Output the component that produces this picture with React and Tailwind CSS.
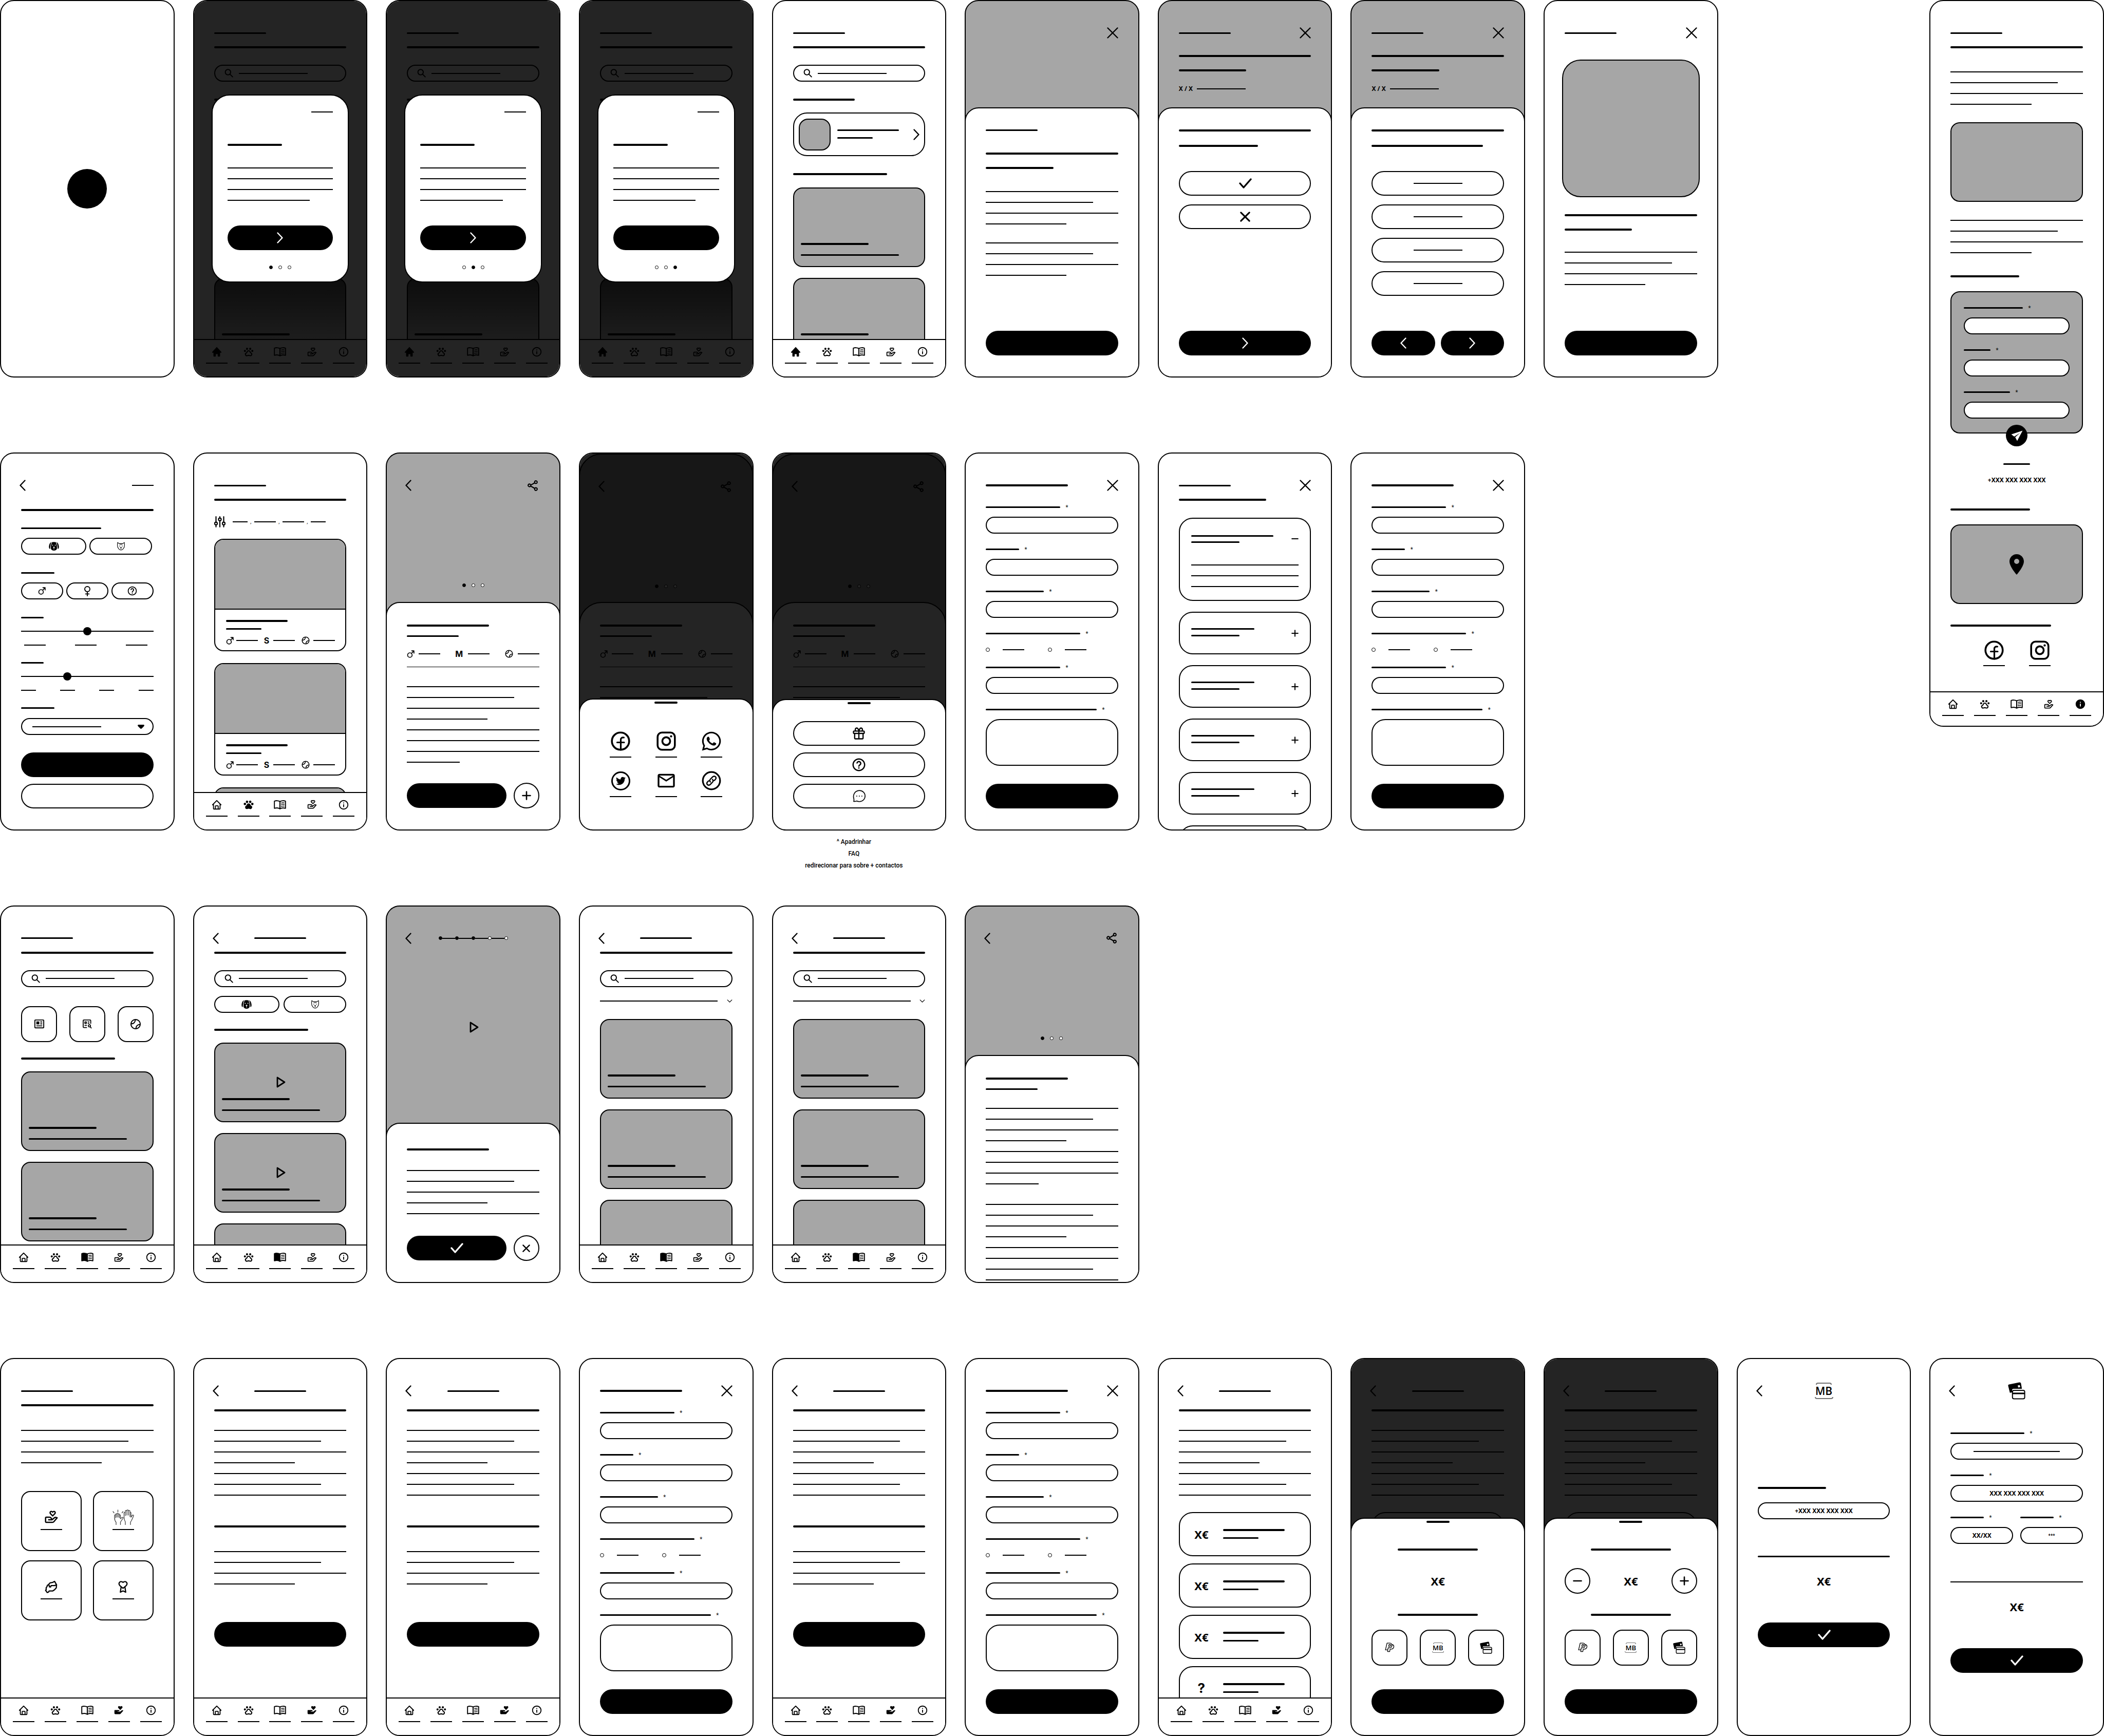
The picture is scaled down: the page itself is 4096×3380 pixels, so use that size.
import React, { useId } from "react";
import {
  BiHome,
  BiSolidHome,
  BiDonateHeart,
  BiSolidDonateHeart,
  BiInfoCircle,
  BiSolidInfoCircle,
  BiShareAlt,
  BiTennisBall,
  BiHelpCircle,
  BiGift,
  BiNews,
} from "react-icons/bi";
import { PiPawPrintBold, PiPawPrintFill } from "react-icons/pi";
import { MdMailOutline, MdLocationOn } from "react-icons/md";
import { FaTwitter, FaWhatsapp } from "react-icons/fa";

/* ---------- placeholder strokes ---------- */

const Thick = ({ className = "w-full" }) => <div className={`h-1 shrink-0 rounded-full bg-black ${className}`} />;
const Mid = ({ className = "w-full" }) => <div className={`h-[3px] shrink-0 rounded-full bg-black ${className}`} />;
const Thin = ({ className = "w-full" }) => <div className={`h-0.5 shrink-0 bg-black ${className}`} />;

const SPAN = { 100: "w-full", 81: "w-[81%]", 78: "w-[78%]", 61: "w-[61%]", 40: "w-[40%]" };
const Para = ({ lines = [100, 81, 100, 61], className = "" }) => (
  <div className={`flex flex-col gap-[19px] ${className}`}>
    {lines.map((n, i) => (
      <Thin key={i} className={SPAN[n]} />
    ))}
  </div>
);

/* ---------- small glyphs ---------- */

const Stroke = ({ d, className, box = "0 0 24 24", w = 3 }) => (
  <svg viewBox={box} className={className} fill="none" stroke="currentColor" strokeWidth={w} strokeLinecap="round" strokeLinejoin="round" aria-hidden="true">
    <path d={d} />
  </svg>
);
const ChevronRight = () => <Stroke box="0 0 12 22" w={2.4} className="h-[22px] w-3" d="M1.5 1.5L10.5 11L1.5 20.5" />;
const ChevronLeft = () => <Stroke box="0 0 12 22" w={2.4} className="h-[22px] w-3" d="M10.5 1.5L1.5 11L10.5 20.5" />;
const Cross = () => <Stroke box="0 0 22 22" w={2.4} className="size-[22px]" d="M1.5 1.5L20.5 20.5M20.5 1.5L1.5 20.5" />;
const BoldCross = ({ className = "size-[22px]" }) => <Stroke box="0 0 22 22" w={3.4} className={className} d="M2 2L20 20M20 2L2 20" />;
const Check = () => <Stroke box="0 0 28 20" w={3.4} className="h-5 w-7" d="M4 10L11 18L25 2" />;
const Plus = ({ className = "size-[18px]" }) => <Stroke box="0 0 18 18" w={2.6} className={className} d="M9 1.5V16.5M1.5 9H16.5" />;
const Minus = ({ className = "size-[18px]" }) => <Stroke box="0 0 18 18" w={2.6} className={className} d="M1.5 9H16.5" />;
const Play = () => <Stroke box="0 0 18 22" w={2.8} className="h-[22px] w-[18px]" d="M2 2L16 11L2 20Z" />;
const Magnifier = () => <Stroke box="0 0 17 17" w={2} className="size-[17px]" d="M12 6.500A5.200 5.200 0 1 1 1.600 6.500A5.200 5.200 0 1 1 12 6.500M10.600 10.400L15.800 15.600" />;
const Male = () => <Stroke box="0 0 16 16" w={1.800} className="size-[15px]" d="M11 10A4.700 4.700 0 1 1 1.600 10A4.700 4.700 0 1 1 11 10M9.600 6.600L14.600 1.400M10.200 1.200H14.800V6" />;
const Female = () => <Stroke box="0 0 16 20" w={1.900} className="h-5 w-4" d="M13 6A5 5 0 1 1 3 6A5 5 0 1 1 13 6M8 11V19M4.600 15.400H11.400" />;
const Sliders = () => (
  <svg viewBox="0 0 22 22" className="size-[22px]" fill="none" stroke="currentColor" strokeWidth="2.2" strokeLinecap="round" aria-hidden="true">
    <path d="M3.500 1.200V11M3.500 17.500V20.800M11 1.200V3.200M11 9V20.800M18.500 1.200V11M18.500 17.500V20.800" />
    <circle cx="3.500" cy="14.300" r="2.600" />
    <circle cx="11" cy="6.200" r="2.600" />
    <circle cx="18.500" cy="14.300" r="2.600" />
  </svg>
);
const Dog = () => (
  <svg viewBox="0 0 20 17" className="h-[17px] w-5" fill="currentColor" aria-hidden="true">
    <path d="M4.800 .6C2.400 1.400 .3 5.500 .3 10c0 2.600 1 4 2.200 3.800L3.400 6.500z" />
    <path d="M15.200 .6C17.600 1.400 19.700 5.500 19.700 10c0 2.600-1 4-2.200 3.800L16.600 6.500z" />
    <path fillRule="evenodd" d="M6 .8C8.500 0 11.500 0 14 .8l1.700 6L16 13c-.8 2.600-3 3.900-6 3.900S4.800 15.600 4 13l.3-6.200zM7.400 5.600a.9 .9 0 1 0 0 1.800 .9 .9 0 0 0 0-1.800m5.200 0a.9 .9 0 1 0 0 1.800 .9 .9 0 0 0 0-1.800M10 9.200l-1.900 1.100L9.500 11.800v2.900h1v-2.900l1.400-1.500z" />
  </svg>
);
const Cat = () => (
  <svg viewBox="0 0 18 18" className="h-[17px] w-[17px]" fill="none" stroke="currentColor" strokeWidth="1.200" strokeLinejoin="round" strokeLinecap="round" aria-hidden="true">
    <path d="M2 1.200L5 3.400H13L16 1.200C16.600 5 16.400 8 15.800 11L12.600 15.600L9 17L5.400 15.600L2.200 11C1.600 8 1.400 5 2 1.200ZM9 3.400V6M6.800 3.600V5.200M11.200 3.600V5.200M8 11.400H10L9 12.600ZM9 12.600V14.200M5.800 8.600H6.600M11.400 8.600H12.200" />
  </svg>
);
const BookShape = ({ className, filled }) => (
  <svg viewBox="0 0 24 18" className={className} fill="none" stroke="currentColor" strokeWidth="1.900" strokeLinejoin="round" strokeLinecap="round" aria-hidden="true">
    <path d="M12 2.600C9.500 .9 4.500 .6 1.200 1.800V15.800C4.500 14.800 9.500 15 12 16.700Z" fill={filled ? "currentColor" : "none"} />
    <path d="M12 2.600C14.500 .9 19.500 .6 22.800 1.800V15.800C19.500 14.800 14.500 15 12 16.700Z" />
    <path d="M14.600 5.600C16.400 4.900 18.400 4.800 20.200 5.100M14.600 8.800C16.400 8.100 18.400 8 20.200 8.300M14.600 12C16.400 11.300 18.400 11.200 20.200 11.500" strokeWidth="1.400" />
  </svg>
);
const Book = ({ className }) => <BookShape className={className} />;
const BookFilled = ({ className }) => <BookShape className={className} filled />;
const Chat = () => (
  <svg viewBox="0 0 28 26" className="h-6 w-[27px]" fill="none" stroke="currentColor" strokeWidth="1.800" strokeLinejoin="round" aria-hidden="true">
    <path d="M2.600 24.200C3.400 22.500 3.400 20.800 2.900 18.500C.5 12 4 1.400 14.500 1.200C21 1.200 26.600 6 26.600 12.700C26.600 19.400 21.500 24.600 14.500 24.600C12.400 24.600 10.800 24.200 9 23.300C7 24.200 5 24.500 2.600 24.200Z" />
    <path d="M9 13H9.100M14.400 13H14.500M19.800 13H19.900" strokeWidth="2" strokeLinecap="round" />
  </svg>
);
const NewsSearch = () => (
  <Stroke box="0 0 20 20" w={1.900} className="size-[19px]" d="M9 17.500H3.500A1.500 1.500 0 0 1 2 16V3.500A1.500 1.500 0 0 1 3.500 2H16A1.500 1.500 0 0 1 17.500 3.500V9M5.500 6H8.500V9H5.500ZM12 6H14M12 9H14M5.500 13H9M17 14A2.200 2.200 0 1 1 12.600 14A2.200 2.200 0 1 1 17 14M16.500 15.800L18.500 18.500" />
);
const Facebook = () => (
  <svg viewBox="0 0 38 38" className="size-[38px]" fill="none" stroke="currentColor" aria-hidden="true">
    <circle cx="19" cy="19" r="16.800" strokeWidth="3.600" />
    <path d="M19.500 36V16.500C19.500 13 21.500 11.500 25.500 12M12.500 21.500H26" strokeWidth="3.200" strokeLinecap="round" />
  </svg>
);
const Instagram = () => (
  <svg viewBox="0 0 38 38" className="size-[38px]" fill="none" stroke="currentColor" strokeWidth="3.600" aria-hidden="true">
    <rect x="2.200" y="2.200" width="33.600" height="33.600" rx="8.500" />
    <circle cx="19" cy="19" r="7.600" />
    <circle cx="28.500" cy="9.600" r="2.200" fill="currentColor" stroke="none" />
  </svg>
);
const LinkCircle = () => (
  <svg viewBox="0 0 38 38" className="size-[38px]" fill="none" stroke="currentColor" strokeLinecap="round" aria-hidden="true">
    <circle cx="19" cy="19" r="16.800" strokeWidth="3.200" />
    <path strokeWidth="2.400" d="M17 21.500C15.300 19.700 15.400 17.600 17 16L21.500 11.500C25.500 8 30 13 26.600 16.600L24.500 18.600M21 16.500C22.700 18.300 22.600 20.400 21 22L16.500 26.500C12.500 30 8 25 11.400 21.400L13.500 19.400" />
  </svg>
);
const Cards = ({ className }) => (
  <svg viewBox="0 0 34 34" className={className} aria-hidden="true">
    <path fill="currentColor" fillRule="evenodd" d="M2.500 4.500L22 .6C24 .3 25 1 25.400 2.600L27.200 13H11C9 13 8 14 8 16V20L3.800 20.800L.4 7C.2 5.600 1 4.800 2.500 4.500ZM19 6.500L20 10.500L24 9.700L23 5.700Z" />
    <rect x="8.800" y="16" width="23.800" height="16.600" rx="3" fill="none" stroke="currentColor" strokeWidth="2" />
    <path d="M9 22H32.500" stroke="currentColor" strokeWidth="3" />
  </svg>
);
const Paypal = () => (
  <svg viewBox="0 0 20 20" className="size-[19px]" fill="none" stroke="currentColor" strokeWidth="1.400" strokeLinejoin="round" aria-hidden="true">
    <path d="M4.500 1.200H10.500C16 1.200 16 10.800 9.500 10.800H6.800L5.800 15.200H1.200ZM15 4.200C20.500 5.500 19 13.600 12.500 13.600H10.800L9.800 18.600H5.600L6.200 15.200M8.600 4.200H10.800C13 4.200 12.600 7.800 9.800 7.800H7.800Z" />
  </svg>
);
const Clapping = () => (
  <svg viewBox="0 0 42 30" className="h-[30px] w-[42px] text-neutral-700" fill="none" stroke="currentColor" strokeWidth="1.300" strokeLinecap="round" strokeLinejoin="round" aria-hidden="true">
    <path d="M7 29.500V25C4.500 22 4 20 4 16V11.500C4 10 6 10 6 11.500V16V9.500C6 8 8.500 8 8.500 9.500V15V8.500C8.500 7 11 7 11 8.500V15V9.500C11 8 13.500 8 13.500 9.500V16V11.500C13.500 10 15.500 10 15.500 11.500V18L18.500 15.500C20 14.500 21.500 16 20.500 17L15.500 24.500V29.500" />
    <path d="M25 29.500V24C23 21 22.500 19 22.500 15V6.500C22.500 5 25 5 25 6.500V12V3C25 1.400 28 1.400 28 3V11V2C28 .5 31 .5 31 2V11V3C31 1.500 34 1.500 34 3V14V6.500C34 5 36 5 36 6.500V15L38.500 11.500C39.500 10 41.500 11 41 12.500L37 21.500L35 24.500V29.500" />
    <path d="M10.500 1V5M1 4L3 6.500M20.500 4L18.500 6.500" />
  </svg>
);
const Hands = () => <Stroke box="0 0 26 26" w={2.400} className="size-[25px]" d="M9 10C6 8 5 10 5 12L3 15V19L1.800 20L5 24.500L8 23.500L9 21.500H16L20 19L23.500 15L24 9L20 2L16.500 4L11 5L8 8L9 10L9.500 13L12 13.500L13 10.500L20 10.500L24 9" />;
const Ribbon = () => <Stroke box="0 0 20 26" w={2.400} className="h-[25px] w-[19px]" d="M10 16L4 11C-1 6 4 -1 10 4C16 -1 21 6 16 11ZM6 14L4.500 24L10 21.500L15.500 24L14 14" />;

/* payment mark: two letters between two brackets */
const Mb = ({ big }) => (
  <span className={`flex flex-col items-center justify-between font-['Open_Sans',sans-serif] font-semibold ${big ? "h-8 w-9 text-[21px]" : "h-5 w-[23px] text-[13px]"}`}>
    <span className={`w-[84%] shrink-0 border-neutral-500 ${big ? "h-1 rounded-t border-2 border-b-0" : "h-[3px] rounded-t-sm border border-b-0"}`} />
    <span className={big ? "leading-6" : "leading-[14px]"}>MB</span>
    <span className={`w-full shrink-0 border-neutral-500 ${big ? "h-1 rounded-b border-2 border-t-0" : "h-[3px] rounded-b-sm border border-t-0"}`} />
  </span>
);

/* ---------- frame pieces ---------- */

const Phone = ({ children, className = "aspect-[375/812] bg-white" }) => (
  <article className={`relative flex w-full flex-col overflow-hidden rounded-[27px] border-2 border-black ${className}`}>{children}</article>
);
const Body = ({ children, className = "" }) => <div className={`flex min-h-0 flex-1 flex-col overflow-hidden px-[39px] pt-[51px] ${className}`}>{children}</div>;
const Top = ({ children, className }) => <div className={`flex shrink-0 flex-col px-[39px] pt-[51px] ${className}`}>{children}</div>;
const Sheet = ({ children, className = "rounded-t-[27px]" }) => (
  <div className={`-mx-0.5 -mb-0.5 flex min-h-0 flex-1 flex-col overflow-hidden border-2 border-black bg-white px-[39px] pb-[41px] ${className}`}>{children}</div>
);
const Dim = () => <div className="absolute inset-0 bg-black/86" />;
const Drawer = ({ children, className = "" }) => (
  <div className={`absolute -inset-x-0.5 -bottom-0.5 flex flex-col rounded-[27px] border-2 border-black bg-white px-[39px] pt-1 ${className}`}>
    <Thick className="w-[45px] self-center" />
    {children}
  </div>
);

const Header = ({ left, center, right }) => (
  <header className="grid shrink-0 grid-cols-[1fr_auto_1fr] grid-rows-[22px] items-center">
    <div className="flex">{left}</div>
    <div>{center}</div>
    <div className="flex justify-end">{right}</div>
  </header>
);
const Back = () => (
  <button type="button" aria-label="Back" className="-ml-[3px]">
    <ChevronLeft />
  </button>
);
const Close = () => (
  <button type="button" aria-label="Close">
    <Cross />
  </button>
);
const Share = () => (
  <button type="button" aria-label="Share">
    <BiShareAlt className="size-[25px]" />
  </button>
);
const Tag = () => <Mid className="w-[101px]" />;

const Pill = ({ children, className = "", label = "Continue" }) => (
  <button type="button" aria-label={label} className={`flex h-12 shrink-0 items-center justify-center rounded-full bg-black text-white ${className}`}>
    {children}
  </button>
);
const Outline = ({ children, className = "h-12", label = "Option" }) => (
  <button type="button" aria-label={label} className={`flex shrink-0 items-center justify-center rounded-full border-2 border-black ${className}`}>
    {children}
  </button>
);
const Tile = ({ children, label, className = "size-[70px] rounded-[18px]" }) => (
  <button type="button" aria-label={label} className={`flex items-center justify-center border-2 border-black ${className}`}>
    {children}
  </button>
);

const Search = () => (
  <label className="mt-8 flex h-[33px] shrink-0 items-center rounded-full border-2 border-black pl-[18px]">
    <Magnifier />
    <Thin className="ml-[11px] w-[134px]" />
    <input type="search" aria-label="Search" className="min-w-0 flex-1 bg-transparent outline-none" />
  </label>
);

const NAV = [
  ["Home", BiHome, BiSolidHome, "size-[22px]"],
  ["Animals", PiPawPrintBold, PiPawPrintFill, "size-[22px]"],
  ["Learn", Book, BookFilled, "h-[18px] w-6"],
  ["Help", BiDonateHeart, BiSolidDonateHeart, "size-[21px]"],
  ["Info", BiInfoCircle, BiSolidInfoCircle, "size-[22px]"],
];
const Nav = ({ active, className = "h-[73px]" }) => (
  <nav className={`flex shrink-0 justify-between border-t-2 border-black bg-white px-[23px] pt-3 ${className}`}>
    {NAV.map(([name, Off, On, size], i) => {
      const Icon = i === active ? On : Off;
      return (
        <a key={name} href="#" aria-label={name} className="flex w-[42px] flex-col items-center">
          <span className="flex h-[22px] items-center">
            <Icon className={size} />
          </span>
          <Thin className="mt-[10px] w-full" />
        </a>
      );
    })}
  </nav>
);

const Dots = ({ at = 0, n = 3, className = "" }) => (
  <div className={`flex justify-center gap-[11px] ${className}`}>
    {Array.from({ length: n }, (_, i) => (
      <span key={i} className={`size-[7px] rounded-full border border-black ${i === at ? "bg-black" : "bg-white"}`} />
    ))}
  </div>
);

const Picture = ({ play, tint = "bg-[#a6a6a6]" }) => (
  <div className={`relative flex h-[155px] shrink-0 flex-col justify-end rounded-[18px] border-2 border-black px-[13px] pb-5 ${tint}`}>
    {play && (
      <button type="button" aria-label="Play" className="absolute inset-0 flex items-center justify-center pl-1">
        <Play />
      </button>
    )}
    <Thick className="w-[132px]" />
    <Mid className="mt-[18px] w-[191px]" />
  </div>
);
const Pictures = ({ n = 3, play, className, tint }) => (
  <div className={`flex flex-col gap-[21px] ${className}`}>
    {Array.from({ length: n }, (_, i) => (
      <Picture key={i} play={play} tint={tint} />
    ))}
  </div>
);

const FIELD = "h-[33px] w-full shrink-0 rounded-full border-2 border-black bg-white text-center font-['Noto_Sans',sans-serif] font-bold outline-none";
const LabelBar = ({ id, w }) => (
  <label htmlFor={id} className="flex h-3 shrink-0 items-center">
    <Mid className={w} />
    <span className="ml-2.5 h-3 font-['Noto_Sans',sans-serif] text-[10px] leading-3">*</span>
  </label>
);
const Field = ({ w, value, size = "text-[12px]", className = "" }) => {
  const id = useId();
  return (
    <div className={`flex min-w-0 flex-col gap-[13px] ${className}`}>
      <LabelBar id={id} w={w} />
      <input id={id} type="text" defaultValue={value} className={`${FIELD} ${size}`} />
    </div>
  );
};
const Area = () => {
  const id = useId();
  return (
    <div className="flex flex-col gap-[13px]">
      <LabelBar id={id} w="w-[216px]" />
      <textarea id={id} className="h-[91px] w-full resize-none rounded-[27px] border-2 border-black outline-none" />
    </div>
  );
};
const Radios = () => {
  const name = useId();
  return (
    <fieldset className="flex flex-col gap-[22px]">
      <legend className="contents">
        <LabelBar w="w-[184px]" />
      </legend>
      <div className="flex gap-[46px]">
        {["Yes", "No"].map((t) => (
          <label key={t} className="flex h-2 items-center gap-[25px]">
            <input type="radio" name={name} aria-label={t} className="size-2 appearance-none rounded-full border border-black bg-white checked:bg-black" />
            <Thin className="w-[42px]" />
          </label>
        ))}
      </div>
    </fieldset>
  );
};

const AnimalPills = ({ className }) => (
  <div className={`flex shrink-0 ${className}`}>
    <Outline label="Dog" className="h-[33px] w-[127px]">
      <Dog />
    </Outline>
    <Outline label="Cat" className="h-[33px] w-[122px]">
      <Cat />
    </Outline>
  </div>
);

/* ---------- screens ---------- */

const HomeContent = ({ tint }) => (
  <>
    <Body>
      <Header left={<Tag />} />
      <Thick className="mt-[15px] w-full" />
      <Search />
      <Thick className="mt-[33px] w-[120px]" />
      <a href="#" aria-label="Featured" className="mt-[23px] flex h-[85px] shrink-0 items-center rounded-[27px] border-2 border-black pr-[9px] pl-[9px]">
        <span className="size-[62px] rounded-[18px] border-2 border-black bg-[#a6a6a6]" />
        <span className="ml-[13px] flex flex-1 flex-col gap-3 pb-0.5">
          <Mid className="w-[120px]" />
          <Mid className="w-[69px]" />
        </span>
        <ChevronRight />
      </a>
      <Thick className="mt-[33px] w-[183px]" />
      <Pictures n={2} className="mt-6" tint={tint} />
    </Body>
    <Nav active={0} />
  </>
);

const Onboarding = ({ step }) => (
  <Phone>
    <HomeContent tint="bg-linear-to-b from-[#5a5a5a] to-[#efefef]" />
    <Dim />
    <section aria-label="Introduction" className="absolute inset-x-[34px] top-[182px] flex flex-col rounded-[35px] border-2 border-black bg-white px-[29px] pt-[31px] pb-[24px]">
      <Thin className="w-[42px] self-end" />
      <Thick className="mt-[61px] w-[106px]" />
      <Para lines={[100, 100, 100, 78]} className="mt-[42px]" />
      <Pill className="mt-12" label="Next">
        {step < 2 && <ChevronRight />}
      </Pill>
      <Dots at={step} className="mt-[30px]" />
    </section>
  </Phone>
);

const Splash = () => (
  <Phone>
    <div className="m-auto size-[77px] rounded-full bg-black" />
  </Phone>
);

const Intro = () => (
  <Phone className="aspect-[375/812] bg-[#a6a6a6]">
    <Top className="h-[207px]">
      <Header right={<Close />} />
    </Top>
    <Sheet className="rounded-t-[27px] pt-[41px]">
      <Tag />
      <Thick className="mt-[42px] w-full" />
      <Thick className="mt-6 w-[51%]" />
      <Para className="mt-[43px]" />
      <Para className="mt-[35px]" />
      <Pill className="mt-auto" />
    </Sheet>
  </Phone>
);

const Quiz = ({ many }) => (
  <Phone className="aspect-[375/812] bg-[#a6a6a6]">
    <Top className="h-[207px]">
      <Header left={<Tag />} right={<Close />} />
      <Thick className="mt-8 w-full" />
      <Thick className="mt-6 w-[51%]" />
      <div className="mt-[26px] flex h-4 items-center gap-2">
        <span className="font-['Noto_Sans',sans-serif] text-[12px] leading-4 font-bold whitespace-pre">X / X</span>
        <Thin className="w-[95px]" />
      </div>
    </Top>
    <Sheet className="rounded-t-[27px] pt-[41px]">
      <Thick />
      <Thick className={`mt-[26px] ${many ? "w-[84%]" : "w-[60%]"}`} />
      <div className="mt-[47px] flex flex-col gap-[17px]">
        {many ? (
          [1, 2, 3, 4].map((i) => (
            <Outline key={i} label={`Answer ${i}`}>
              <Thin className="w-[95px]" />
            </Outline>
          ))
        ) : (
          <>
            <Outline label="Yes">
              <Check />
            </Outline>
            <Outline label="No">
              <BoldCross className="size-5" />
            </Outline>
          </>
        )}
      </div>
      <div className="mt-auto flex gap-[11px]">
        {many && (
          <Pill label="Previous" className="flex-1">
            <ChevronLeft />
          </Pill>
        )}
        <Pill label="Next" className="flex-1">
          <ChevronRight />
        </Pill>
      </div>
    </Sheet>
  </Phone>
);

const Result = () => (
  <Phone>
    <Body className="pb-[41px]">
      <Header left={<Tag />} right={<Close />} />
      <div className="-mx-[5px] mt-[41px] aspect-square shrink-0 rounded-[36px] border-2 border-black bg-[#a6a6a6]" />
      <Thick className="mt-[33px] w-full" />
      <Thick className="mt-6 w-[51%]" />
      <Para className="mt-[41px]" />
      <Pill className="mt-auto" />
    </Body>
  </Phone>
);

const About = () => (
  <Phone className="self-start bg-white">
    <div className="flex flex-col px-[39px] pt-[51px]">
      <Header left={<Tag />} />
      <Thick className="mt-[15px] w-full" />
      <Para className="mt-[45px]" />
      <div className="mt-[34px] h-[155px] rounded-[18px] border-2 border-black bg-[#a6a6a6]" />
      <Para className="mt-[35px]" />
      <Thick className="mt-[43px] w-[52%]" />
      <form className="mt-[27px] flex flex-col rounded-[18px] border-2 border-black bg-[#a6a6a6] px-6 pt-6 pb-[27px]">
        <div className="flex flex-col gap-6">
          <Field w="w-[115px]" />
          <Field w="w-[52px]" />
          <Field w="w-[90px]" />
        </div>
      </form>
      <button type="button" aria-label="Send" className="relative -mt-[17px] flex size-[42px] items-center justify-center self-center rounded-full bg-black text-white">
        <svg viewBox="0 0 24 22" className="h-[21px] w-[23px]" fill="currentColor" aria-hidden="true">
          <path d="M23.500 .5L.5 8L6.500 12.500L18.500 5L8.500 14L12.500 21.500Z" />
        </svg>
      </button>
      <Mid className="mt-[33px] w-[52px] self-center" />
      <p className="mt-[22px] text-center font-['Noto_Sans',sans-serif] text-[12px] leading-4 font-bold">+XXX XXX XXX XXX</p>
      <Thick className="mt-[47px] w-[60%]" />
      <div className="mt-[27px] flex h-[155px] items-center justify-center rounded-[18px] border-2 border-black bg-[#a6a6a6]">
        <MdLocationOn className="size-12" />
      </div>
      <Thick className="mt-10 w-[76%]" />
      <div className="mt-[27px] grid w-[178px] grid-cols-2 self-center">
        {[Facebook, Instagram].map((Icon, i) => (
          <a key={i} href="#" aria-label={i ? "Instagram" : "Facebook"} className="flex flex-col items-center gap-[10px]">
            <Icon />
            <Thin className="w-[42px]" />
          </a>
        ))}
      </div>
    </div>
    <Nav active={4} className="mt-[49px] h-[67px]" />
  </Phone>
);

const RANGE =
  "mt-[17px] h-4 w-full shrink-0 cursor-pointer appearance-none bg-transparent [&::-webkit-slider-runnable-track]:h-0.5 [&::-webkit-slider-runnable-track]:bg-black [&::-webkit-slider-thumb]:-mt-[7px] [&::-webkit-slider-thumb]:size-4 [&::-webkit-slider-thumb]:appearance-none [&::-webkit-slider-thumb]:rounded-full [&::-webkit-slider-thumb]:bg-black";

const Filters = () => (
  <Phone>
    <Body>
      <Header left={<Back />} right={<Thin className="w-[42px]" />} />
      <Thick className="mt-[35px] w-full" />
      <Mid className="mt-8 w-[156px]" />
      <AnimalPills className="mt-[17px] gap-1.5" />
      <Mid className="mt-[34px] w-[65px]" />
      <div className="mt-[17px] flex shrink-0 gap-1.5">
        <Outline label="Male" className="h-[33px] flex-1">
          <Male />
        </Outline>
        <Outline label="Female" className="h-[33px] flex-1">
          <Female />
        </Outline>
        <Outline label="Unknown" className="h-[33px] flex-1">
          <BiHelpCircle className="size-[21px]" />
        </Outline>
      </div>
      <Mid className="mt-[34px] w-11" />
      <input type="range" aria-label="Age" defaultValue="50" className={RANGE} />
      <div className="mt-[18px] flex justify-between pr-3 pl-1.5">
        <Thin className="w-[42px]" />
        <Thin className="w-[42px]" />
        <Thin className="w-[42px]" />
      </div>
      <Mid className="mt-8 w-11" />
      <input type="range" aria-label="Size" defaultValue="34" className={RANGE} />
      <div className="mt-[18px] flex justify-between">
        {[0, 1, 2, 3].map((i) => (
          <Thin key={i} className="w-[29px]" />
        ))}
      </div>
      <Mid className="mt-8 w-[65px]" />
      <div className="relative mt-[18px] flex h-[33px] shrink-0 items-center justify-between rounded-full border-2 border-black pr-4 pl-5">
        <Thin className="w-[134px]" />
        <svg viewBox="0 0 13 8" className="h-2 w-[13px]" aria-hidden="true">
          <path d="M2 0H11C13 0 13.500 1.500 12.200 3L8 7.300C7 8.200 6 8.200 5 7.300L.8 3C-.5 1.500 0 0 2 0Z" />
        </svg>
        <select aria-label="Region" className="absolute inset-0 size-full appearance-none opacity-0">
          <option> </option>
        </select>
      </div>
      <Pill className="mt-[34px]" label="Apply" />
      <Outline className="mt-[13px] h-12" label="Clear" />
    </Body>
  </Phone>
);

const Trait = ({ icon, className }) => (
  <span className={`flex items-center ${className}`}>
    {icon}
    <Thin className="w-[42px]" />
  </span>
);
const Letter = ({ children }) => <span className="font-['Inter',sans-serif] text-[16px] leading-4 font-bold">{children}</span>;

const AnimalCard = ({ peek }) => (
  <a href="#" aria-label="Animal" className="flex shrink-0 flex-col overflow-hidden rounded-[18px] border-2 border-black">
    <span className="h-[136px] border-b-2 border-black bg-[#a6a6a6]" />
    {!peek && (
      <span className="flex flex-col pt-5 pb-[11px] pl-[21px]">
        <Thick className="w-[120px]" />
        <Mid className="mt-3 w-[69px]" />
        <span className="mt-[13px] flex h-4 gap-3">
          <Trait className="gap-[5px]" icon={<Male />} />
          <Trait className="gap-2" icon={<Letter>S</Letter>} />
          <Trait className="gap-1.5" icon={<BiTennisBall className="size-[18px]" />} />
        </span>
      </span>
    )}
  </a>
);

const Animals = () => (
  <Phone>
    <Body>
      <Header left={<Tag />} />
      <Thick className="mt-[15px] w-full" />
      <div className="mt-[30px] flex h-[22px] shrink-0 items-center">
        <Sliders />
        <div className="ml-[14px] flex items-center">
          {["w-[29px]", "w-[42px]", "w-[42px]", "w-[29px]"].map((w, i) => (
            <React.Fragment key={i}>
              {i > 0 && <span className="w-[13px] text-center font-['Roboto',sans-serif] text-[10px] leading-none">,</span>}
              <Thin className={w} />
            </React.Fragment>
          ))}
        </div>
      </div>
      <div className="mt-[22px] flex flex-col gap-[23px]">
        <AnimalCard />
        <AnimalCard />
        <AnimalCard peek />
      </div>
    </Body>
    <Nav active={1} />
  </Phone>
);

const DetailContent = ({ dim }) => (
  <>
    <Top className={dim ? "-mx-0.5 -mb-[46px] h-[335px] rounded-t-[44px] border-2 border-black bg-[#a6a6a6] pt-[49px]" : "h-[289px]"}>
      <Header left={<Back />} right={<Share />} />
      <Dots className="mt-[180px]" />
    </Top>
    <Sheet className={dim ? "relative rounded-t-[44px] pt-[42px]" : "rounded-t-[27px] pt-[42px]"}>
      <Thick className="w-[160px]" />
      <Mid className="mt-[17px] w-[101px]" />
      <div className="mt-[25px] flex h-4 shrink-0 justify-between">
        <Trait className="gap-2" icon={<Male />} />
        <Trait className="gap-2.5" icon={<Letter>M</Letter>} />
        <Trait className="gap-2" icon={<BiTennisBall className="size-[18px]" />} />
      </div>
      <div className="mt-[17px] h-px shrink-0 bg-black" />
      <Para className="mt-[37px]" lines={[100, 81, 100, 61, 100, 100, 100, 40]} />
      <div className="mt-auto flex items-center gap-[14px]">
        <Pill className="flex-1" label="Adopt" />
        <Outline className="size-[50px]" label="More">
          <Plus />
        </Outline>
      </div>
    </Sheet>
  </>
);
const Detail = () => (
  <Phone className="aspect-[375/812] bg-[#a6a6a6]">
    <DetailContent />
  </Phone>
);
const DetailDim = ({ children }) => (
  <Phone>
    <DetailContent dim />
    <Dim />
    {children}
  </Phone>
);

const SHARE = [
  ["Facebook", <Facebook />],
  ["Instagram", <Instagram />],
  ["WhatsApp", <FaWhatsapp className="size-[42px]" />],
  [
    "Twitter",
    <span className="flex size-[37px] items-center justify-center rounded-full border-[3px] border-black">
      <FaTwitter className="size-[19px]" />
    </span>,
  ],
  ["Mail", <MdMailOutline className="size-10" />],
  ["Copy link", <LinkCircle />],
];
const ShareDetail = () => (
  <DetailDim>
    <Drawer className="pb-[63px]">
      <div className="-mx-1 mt-[55px] grid grid-cols-3 gap-y-[27px]">
        {SHARE.map(([name, icon]) => (
          <a key={name} href="#" aria-label={name} className="flex flex-col items-center gap-[11px]">
            <span className="flex h-[37px] items-center">{icon}</span>
            <Thin className="w-[42px]" />
          </a>
        ))}
      </div>
    </Drawer>
  </DetailDim>
);
const MoreDetail = () => (
  <DetailDim>
    <Drawer className="pb-[41px]">
      <div className="mt-[33px] flex flex-col gap-[13px]">
        <Outline label="Sponsor">
          <BiGift className="size-7" />
        </Outline>
        <Outline label="FAQ">
          <BiHelpCircle className="size-[30px]" />
        </Outline>
        <Outline label="Contact">
          <Chat />
        </Outline>
      </div>
    </Drawer>
  </DetailDim>
);

const Form = () => (
  <Phone>
    <Body className="pb-[41px]">
      <Header left={<Thick className="w-[160px]" />} right={<Close />} />
      <form className="mt-[25px] flex flex-1 flex-col">
        <div className="flex flex-col gap-6">
          <Field w="w-[145px]" />
          <Field w="w-[65px]" />
          <Field w="w-[113px]" />
          <Radios />
          <Field w="w-[145px]" />
          <Area />
        </div>
        <Pill className="mt-auto" label="Submit" />
      </form>
    </Body>
  </Phone>
);

const Faq = () => (
  <Phone>
    <Body>
      <Header left={<Tag />} right={<Close />} />
      <Thick className="mt-[15px] w-[66%]" />
      <div className="mt-[33px] flex flex-col gap-[21px]">
        <section className="flex h-[162px] shrink-0 flex-col rounded-[27px] border-2 border-black px-[22px] pt-[32px]">
          <div className="flex items-start justify-between">
            <div className="flex flex-col gap-[9px]">
              <Mid className="w-[160px]" />
              <Mid className="w-[94px]" />
            </div>
            <button type="button" aria-label="Collapse">
              <Minus className="size-[14px]" />
            </button>
          </div>
          <Para lines={[100, 100, 100]} className="mt-[42px]" />
        </section>
        {[1, 2, 3, 4, 5].map((i) => (
          <button key={i} type="button" aria-label={`Question ${i}`} className="flex h-[83px] shrink-0 items-center justify-between rounded-[27px] border-2 border-black px-[22px]">
            <span className="flex flex-col gap-[10px] pb-1">
              <Mid className="w-[123px]" />
              <Mid className="w-[94px]" />
            </span>
            <Plus className="size-[14px]" />
          </button>
        ))}
      </div>
    </Body>
  </Phone>
);

const Learn = () => (
  <Phone>
    <Body>
      <Header left={<Tag />} />
      <Thick className="mt-[15px] w-full" />
      <Search />
      <div className="mt-[37px] flex shrink-0 justify-between">
        <Tile label="News">
          <BiNews className="size-[23px]" />
        </Tile>
        <Tile label="Find articles">
          <NewsSearch />
        </Tile>
        <Tile label="Training">
          <BiTennisBall className="size-6" />
        </Tile>
      </div>
      <Thick className="mt-[30px] w-[183px]" />
      <Pictures n={2} className="mt-[23px]" />
    </Body>
    <Nav active={2} />
  </Phone>
);
const Videos = () => (
  <Phone>
    <Body>
      <Header left={<Back />} center={<Tag />} />
      <Thick className="mt-[15px] w-full" />
      <Search />
      <AnimalPills className="mt-[17px] justify-between" />
      <Thick className="mt-[31px] w-[183px]" />
      <Pictures play className="mt-[23px]" />
    </Body>
    <Nav active={2} />
  </Phone>
);
const Lesson = () => (
  <Phone className="aspect-[375/812] bg-[#a6a6a6]">
    <Top className="h-[421px]">
      <Header
        left={<Back />}
        center={
          <ol className="flex items-center" aria-label="Steps">
            {[1, 1, 1, 0, 0].map((on, i) => (
              <li key={i} className="flex items-center">
                {i > 0 && <Thin className="w-[25px]" />}
                <span className={`size-[7px] rounded-full border border-black ${on ? "bg-black" : "bg-white"}`} />
              </li>
            ))}
          </ol>
        }
      />
      <button type="button" aria-label="Play" className="mt-[151px] self-center pl-1">
        <Play />
      </button>
    </Top>
    <Sheet className="rounded-t-[27px] pt-12">
      <Thick className="w-[160px]" />
      <Para className="mt-[38px]" lines={[100, 81, 100, 61, 100]} />
      <div className="mt-auto flex items-center gap-[14px]">
        <Pill className="flex-1" label="Done">
          <Check />
        </Pill>
        <Outline className="size-[50px]" label="Dismiss">
          <BoldCross className="size-[15px]" />
        </Outline>
      </div>
    </Sheet>
  </Phone>
);
const Articles = () => (
  <Phone>
    <Body>
      <Header left={<Back />} center={<Tag />} />
      <Thick className="mt-[15px] w-full" />
      <Search />
      <button type="button" aria-label="Sort" className="mt-[23px] flex h-2 shrink-0 items-center justify-between">
        <Thin className="w-[229px]" />
        <Stroke box="0 0 12 7" w={1.500} className="h-[6px] w-[11px]" d="M1 1L6 6L11 1" />
      </button>
      <Pictures className="mt-[31px]" />
    </Body>
    <Nav active={2} />
  </Phone>
);
const Article = () => (
  <Phone className="aspect-[375/812] bg-[#a6a6a6]">
    <Top className="h-[289px]">
      <Header left={<Back />} right={<Share />} />
      <Dots className="mt-[180px]" />
    </Top>
    <Sheet className="rounded-t-[27px] pt-[42px]">
      <Thick className="w-[160px]" />
      <Mid className="mt-[17px] w-[101px]" />
      <Para className="mt-[35px]" lines={[100, 81, 100, 61, 100, 100, 100, 40]} />
      <Para className="mt-[38px]" lines={[100, 81, 100, 61, 100, 100, 81, 100]} />
    </Sheet>
  </Phone>
);

const Help = () => (
  <Phone>
    <Body>
      <Header left={<Tag />} />
      <Thick className="mt-[15px] w-full" />
      <Para className="mt-[46px]" />
      <div className="mt-[54px] grid grid-cols-2 gap-x-[22px] gap-y-[18px]">
        {[
          ["Donate", <BiDonateHeart className="size-[30px]" />],
          ["Volunteer", <Clapping />],
          ["Partner", <Hands />],
          ["Sponsor", <Ribbon />],
        ].map(([name, icon]) => (
          <a key={name} href="#" aria-label={name} className="flex h-[117px] flex-col items-center rounded-[18px] border-2 border-black pt-[34px]">
            <span className="flex h-[30px] items-center">{icon}</span>
            <Thin className="mt-2 w-[42px]" />
          </a>
        ))}
      </div>
    </Body>
    <Nav active={3} />
  </Phone>
);
const LONG = [100, 81, 100, 61, 100, 81, 100];
const HelpTopic = () => (
  <Phone>
    <Body>
      <Header left={<Back />} center={<Tag />} />
      <Thick className="mt-[25px] w-full" />
      <Para className="mt-9" lines={LONG} />
      <Thick className="mt-[58px] w-full" />
      <Para className="mt-[46px]" />
      <Pill className="mt-[73px]" />
    </Body>
    <Nav active={3} />
  </Phone>
);

const Euro = ({ children = "X€" }) => <span className="text-center font-['Noto_Sans',sans-serif] text-[22px] leading-6 font-bold">{children}</span>;
const AmountRow = ({ children }) => (
  <button type="button" aria-label="Amount" className="flex h-[86px] shrink-0 items-center rounded-[27px] border-2 border-black pl-[22px] text-left">
    <span className="flex w-10 justify-center">{children}</span>
    <span className="ml-[22px] flex flex-col gap-3 pb-0.5">
      <Thick className="w-[120px]" />
      <Mid className="w-[69px]" />
    </span>
  </button>
);
const AmountsContent = () => (
  <Body>
    <Header left={<Back />} center={<Tag />} />
    <Thick className="mt-[25px] w-full" />
    <Para className="mt-9" lines={LONG} />
    <div className="mt-8 flex flex-col gap-[14px]">
      <AmountRow><Euro /></AmountRow>
      <AmountRow><Euro /></AmountRow>
      <AmountRow><Euro /></AmountRow>
      <AmountRow><span className="font-['Inter',sans-serif] text-[26px] leading-6 font-bold">?</span></AmountRow>
    </div>
  </Body>
);
const Amounts = () => (
  <Phone>
    <AmountsContent />
    <Nav active={3} />
  </Phone>
);
const Payment = ({ custom }) => (
  <Phone>
    <AmountsContent />
    <Dim />
    <Drawer className="pb-[41px]">
      <Thick className="mt-[50px] w-[156px] self-center" />
      <div className={`mt-[34px] flex h-[50px] items-center ${custom ? "justify-between" : "justify-center"}`}>
        {custom && (
          <Outline className="size-[50px]" label="Less">
            <Minus />
          </Outline>
        )}
        <Euro />
        {custom && (
          <Outline className="size-[50px]" label="More">
            <Plus />
          </Outline>
        )}
      </div>
      <Thick className="mt-[39px] w-[156px] self-center" />
      <div className="mt-[27px] flex justify-between">
        <Tile label="PayPal"><Paypal /></Tile>
        <Tile label="MB"><Mb /></Tile>
        <Tile label="Card"><Cards className="size-6" /></Tile>
      </div>
      <Pill className="mt-[46px]" />
    </Drawer>
  </Phone>
);
const PayPhone = () => (
  <Phone>
    <Body>
      <Header left={<Back />} center={<Mb big />} />
      <Thick className="mt-[176px] w-[133px]" />
      <input type="tel" aria-label="Phone number" defaultValue="+XXX XXX XXX XXX" className={`mt-[26px] text-[12px] ${FIELD}`} />
      <Mid className="mt-[71px] w-full" />
      <span className="mt-[34px] flex justify-center"><Euro /></span>
      <Pill className="mt-[69px]" label="Confirm"><Check /></Pill>
    </Body>
  </Phone>
);
const PayCard = () => (
  <Phone>
    <Body>
      <Header left={<Back />} center={<Cards className="size-[34px]" />} />
      <div className="mt-[65px] flex flex-col gap-6">
        <div className="relative">
          <Field w="w-[144px]" />
          <Thin className="pointer-events-none absolute inset-x-[45px] bottom-[15px]" />
        </div>
        <Field w="w-[65px]" value="XXX XXX XXX XXX" />
        <div className="flex gap-[14px]">
          <Field w="w-[65px]" value="XX/XX" className="flex-1" />
          <Field w="w-[65px]" value="***" size="text-[8px]" className="flex-1" />
        </div>
      </div>
      <Thin className="mt-[73px] w-full" />
      <span className="mt-[35px] flex justify-center"><Euro /></span>
      <Pill className="mt-[69px]" label="Confirm"><Check /></Pill>
    </Body>
  </Phone>
);

/* ---------- board ---------- */

const Cell = ({ children, caption, last }) => (
  <figure className="flex min-w-0 flex-col">
    {children}
    {!last && <figcaption className="h-[146px] pt-[11px] pr-5 text-center font-['Roboto',sans-serif] text-[12px] leading-[23px] font-medium">{caption}</figcaption>}
  </figure>
);

const NOTE = (
  <>
    ^ Apadrinhar
    <br />
    FAQ
    <br />
    redirecionar para sobre + contactos
  </>
);

const ROWS = [
  [<Splash />, <Onboarding step={0} />, <Onboarding step={1} />, <Onboarding step={2} />, <Phone><HomeContent /></Phone>, <Intro />, <Quiz />, <Quiz many />, <Result />],
  [<Filters />, <Animals />, <Detail />, <ShareDetail />, <MoreDetail />, <Form />, <Faq />, <Form />],
  [<Learn />, <Videos />, <Lesson />, <Articles />, <Articles />, <Article />],
  [<Help />, <HelpTopic />, <HelpTopic />, <Form />, <HelpTopic />, <Form />, <Amounts />, <Payment />, <Payment custom />, <PayPhone />, <PayCard />],
];
const START = ["", "col-start-1", "col-start-1", "col-start-1"];

export default function App() {
  return (
    <main className="grid w-full grid-cols-11 gap-x-9 bg-white text-black">
      <div className="col-start-11 row-span-2 row-start-1 flex">
        <About />
      </div>
      {ROWS.map((row, r) =>
        row.map((screen, c) => (
          <div key={`${r}-${c}`} className={c === 0 ? START[r] : ""}>
            <Cell last={r === 3} caption={r === 1 && c === 4 ? NOTE : null}>
              {screen}
            </Cell>
          </div>
        ))
      )}
    </main>
  );
}
